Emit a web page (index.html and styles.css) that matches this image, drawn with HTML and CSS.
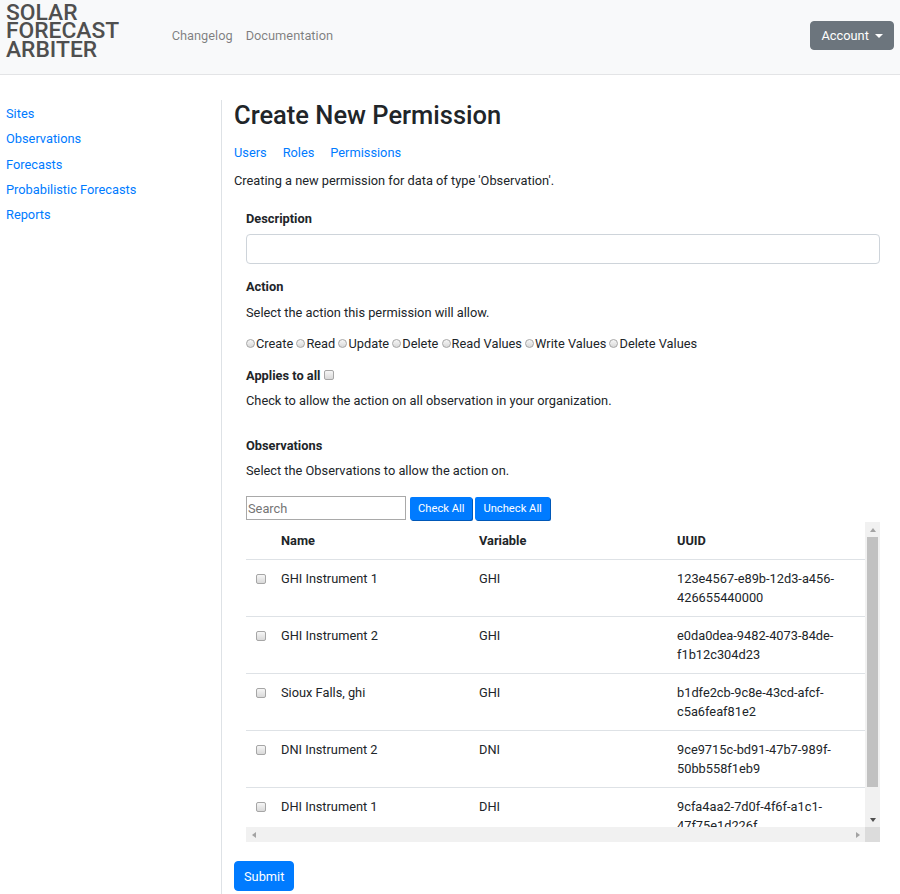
FILE: index.html
```html
<!DOCTYPE html>
<html lang="en">
<head>
<meta charset="utf-8">
<title>Create New Permission - Solar Forecast Arbiter</title>
<link rel="stylesheet" href="styles.css">
</head>
<body>
<header class="navbar">
  <a class="brand" href="#">SOLAR<br>FORECAST<br>ARBITER</a>
  <nav class="topnav">
    <a href="#">Changelog</a>
    <a href="#">Documentation</a>
  </nav>
  <button class="account" type="button">Account <span class="caret"></span></button>
</header>
<div class="layout">
  <aside class="sidebar">
    <a href="#">Sites</a>
    <a href="#">Observations</a>
    <a href="#">Forecasts</a>
    <a href="#">Probabilistic Forecasts</a>
    <a href="#">Reports</a>
  </aside>
  <main class="content">
    <h1 class="title">Create New Permission</h1>
    <nav class="subnav">
      <a href="#">Users</a>
      <a href="#">Roles</a>
      <a href="#">Permissions</a>
    </nav>
    <p class="intro">Creating a new permission for data of type 'Observation'.</p>
    <form class="perm-form">
      <div class="fields">
        <label class="label" for="desc">Description</label>
        <input class="text-input" id="desc" type="text">
        <div class="label label-action">Action</div>
        <p class="help help-tight">Select the action this permission will allow.</p>
        <div class="radios"><input type="radio" name="action" class="radio">Create <input type="radio" name="action" class="radio">Read <input type="radio" name="action" class="radio">Update <input type="radio" name="action" class="radio">Delete <input type="radio" name="action" class="radio">Read Values <input type="radio" name="action" class="radio">Write Values <input type="radio" name="action" class="radio">Delete Values</div>
        <div class="label label-applies">Applies to all <input type="checkbox" class="check"></div>
        <p class="help help-small">Check to allow the action on all observation in your organization.</p>
        <div class="label label-obs">Observations</div>
        <p class="help help-small">Select the Observations to allow the action on.</p>
        <div class="toolbar">
          <input class="search" type="text" placeholder="Search">
          <button type="button" class="small-btn">Check All</button>
          <button type="button" class="small-btn">Uncheck All</button>
        </div>
        <div class="scroll-box">
          <div class="viewport">
            <table class="obs-table">
              <colgroup>
                <col class="col-check">
                <col class="col-wide">
                <col class="col-wide">
                <col class="col-wide">
              </colgroup>
              <thead>
                <tr><th></th><th>Name</th><th>Variable</th><th>UUID</th></tr>
              </thead>
              <tbody>
                <tr><td class="cell-check"><input type="checkbox" class="check"></td><td>GHI Instrument 1</td><td>GHI</td><td>123e4567-e89b-12d3-a456-426655440000</td></tr>
                <tr><td class="cell-check"><input type="checkbox" class="check"></td><td>GHI Instrument 2</td><td>GHI</td><td>e0da0dea-9482-4073-84de-f1b12c304d23</td></tr>
                <tr><td class="cell-check"><input type="checkbox" class="check"></td><td>Sioux Falls, ghi</td><td>GHI</td><td>b1dfe2cb-9c8e-43cd-afcf-c5a6feaf81e2</td></tr>
                <tr><td class="cell-check"><input type="checkbox" class="check"></td><td>DNI Instrument 2</td><td>DNI</td><td>9ce9715c-bd91-47b7-989f-50bb558f1eb9</td></tr>
                <tr><td class="cell-check"><input type="checkbox" class="check"></td><td>DHI Instrument 1</td><td>DHI</td><td>9cfa4aa2-7d0f-4f6f-a1c1-47f75e1d226f</td></tr>
              </tbody>
            </table>
          </div>
          <div class="vbar">
            <div class="sb-btn"><span class="arrow arrow-up"></span></div>
            <div class="vtrack"><div class="vthumb"></div></div>
            <div class="sb-btn"><span class="arrow arrow-down"></span></div>
          </div>
          <div class="hbar">
            <div class="sb-btn"><span class="arrow arrow-left"></span></div>
            <div class="htrack"></div>
            <div class="sb-btn"><span class="arrow arrow-right"></span></div>
          </div>
          <div class="sb-corner"></div>
        </div>
      </div>
      <button type="submit" class="submit">Submit</button>
    </form>
  </main>
</div>
</body>
</html>
```
FILE: styles.css
```css
* { box-sizing: border-box; }

html, body {
  margin: 0;
  padding: 0;
  background: #fff;
}

body {
  font-family: Roboto, "Liberation Sans", Arial, sans-serif;
  font-size: 12.8px;
  line-height: 21px;
  color: #212529;
}

a { color: #007bff; text-decoration: none; }

/* Top navbar */
.navbar {
  display: flex;
  align-items: flex-start;
  height: 75px;
  background: #f8f9fa;
  border-bottom: 1px solid #e3e4e6;
  padding: 0 6px;
}

.brand {
  display: block;
  padding-top: 3.5px;
  font-size: 22.8px;
  line-height: 18.8px;
  font-weight: 500;
  color: #4f4f4f;
}

.topnav {
  display: flex;
  margin-left: 46px;
  margin-top: 24.5px;
}

.topnav a {
  padding: 0 6.5px;
  color: rgba(0, 0, 0, 0.5);
}

.account {
  margin-left: auto;
  margin-top: 21px;
  height: 29px;
  padding: 0 10px;
  background: #6c757d;
  border: 1px solid #6c757d;
  border-radius: 4px;
  color: #fff;
  font-family: inherit;
  font-size: 12.8px;
  line-height: 27px;
}

.caret {
  display: inline-block;
  width: 0;
  height: 0;
  margin-left: 3px;
  vertical-align: 2px;
  border-top: 4.9px solid #fff;
  border-left: 4.2px solid transparent;
  border-right: 4.2px solid transparent;
}

/* Layout */
.layout {
  display: flex;
  margin-top: 25px;
}

.sidebar {
  width: 221px;
  flex: none;
  display: flex;
  flex-direction: column;
  padding: 1px 6px 0;
}

.sidebar a {
  line-height: 25.25px;
}

.content {
  flex: 1;
  min-height: 800px;
  border-left: 1px solid #dee2e6;
  padding: 0 8px 0 12px;
}

.title {
  margin: 0 0 10.3px;
  font-size: 25.5px;
  line-height: 31.2px;
  font-weight: 500;
  color: #212529;
}

.subnav {
  display: flex;
  gap: 16px;
  margin-bottom: 7px;
}

.intro {
  margin: 0 0 17px;
}

.fields {
  padding: 0 12px;
}

.label {
  display: block;
  font-weight: 700;
  margin: 0;
}

.text-input {
  display: block;
  width: 100%;
  height: 30px;
  margin-top: 5.5px;
  border: 1px solid #ced4da;
  border-radius: 4px;
  font-family: inherit;
  font-size: 12.8px;
  padding: 0 8px;
}

.label-action { margin-top: 11.5px; }
.help { margin: 0; }
.help-tight { margin-top: 5px; }
.help-small { margin-top: 4px; }

.radios { margin-top: 10px; }
.label-applies { margin-top: 11px; }
.label-obs { margin-top: 24px; }

.radio, .check {
  -webkit-appearance: none;
  appearance: none;
  display: inline-block;
  margin: 0 1px 0 0;
  border: 1px solid #a6a6a6;
  background: linear-gradient(#f6f6f6, #d9d9d9);
}

.radio {
  width: 9px;
  height: 9px;
  vertical-align: -0.5px;
  border-radius: 50%;
}

.check {
  width: 10px;
  height: 10px;
  vertical-align: -0.5px;
  border-radius: 2px;
}

.toolbar {
  display: flex;
  align-items: flex-start;
  margin-top: 15.5px;
  height: 24px;
}

.search {
  width: 160px;
  height: 24px;
  border: 1px solid #a9a9a9;
  padding: 0 1px;
  font-family: inherit;
  font-size: 12.8px;
  color: #212529;
}

.search::placeholder { color: #757575; }

.small-btn {
  height: 23px;
  margin-top: 1px;
  margin-left: 4px;
  padding: 0 8px;
  background: #007bff;
  border: 0;
  border-radius: 2px;
  box-shadow: 1px 1px 0 #0058b8;
  color: #fff;
  font-family: inherit;
  font-size: 11.2px;
  line-height: 23px;
}

.small-btn + .small-btn { margin-left: 3px; }

/* Scrolling table with classic scrollbars */
.scroll-box {
  margin-top: 2px;
  height: 320px;
  display: grid;
  grid-template-columns: 1fr 15px;
  grid-template-rows: 1fr 15px;
}

.viewport {
  overflow: hidden;
}

.vbar {
  display: flex;
  flex-direction: column;
  background: #f1f1f1;
}

.hbar {
  display: flex;
  background: #f1f1f1;
}

.sb-btn {
  width: 15px;
  height: 15px;
  flex: none;
  display: flex;
  align-items: center;
  justify-content: center;
}

.vtrack {
  flex: 1;
  padding: 0 2px;
}

.vthumb {
  height: 250px;
  background: #c1c1c1;
}

.htrack { flex: 1; }

.sb-corner { background: #dcdcdc; }

.arrow {
  display: block;
  width: 0;
  height: 0;
}

.arrow-up {
  border-bottom: 4px solid #a3a3a3;
  border-left: 3.5px solid transparent;
  border-right: 3.5px solid transparent;
}

.arrow-down {
  border-top: 4px solid #505050;
  border-left: 3.5px solid transparent;
  border-right: 3.5px solid transparent;
}

.arrow-left {
  border-right: 4px solid #a3a3a3;
  border-top: 3.5px solid transparent;
  border-bottom: 3.5px solid transparent;
}

.arrow-right {
  border-left: 4px solid #a3a3a3;
  border-top: 3.5px solid transparent;
  border-bottom: 3.5px solid transparent;
}

.obs-table {
  table-layout: fixed;
  width: 619px;
  border-collapse: collapse;
}

.col-check { width: 25px; }
.col-wide { width: 198px; }

.obs-table th,
.obs-table td {
  padding: 9px 10px;
  line-height: 19px;
  text-align: left;
  vertical-align: top;
  border-bottom: 1px solid #dee2e6;
}

.obs-table th { font-weight: 700; }

.obs-table .cell-check { padding: 9px 0 9px 10px; }
.cell-check .check { margin-top: 5px; display: block; }

.submit {
  display: block;
  margin-top: 19px;
  height: 30px;
  padding: 0 9px;
  background: #007bff;
  border: 1px solid #007bff;
  border-radius: 4px;
  color: #fff;
  font-family: inherit;
  font-size: 12.8px;
}
```
